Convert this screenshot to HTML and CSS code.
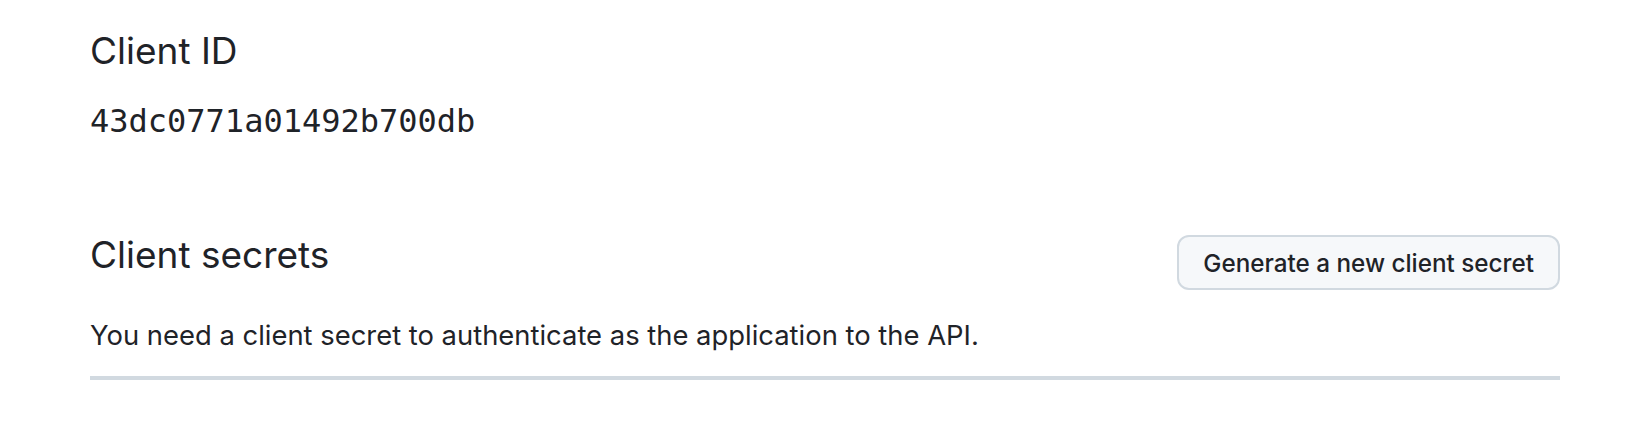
FILE: index.html
```html
<!DOCTYPE html>
<html lang="en">
<head>
<meta charset="utf-8">
<title>Client ID</title>
<link rel="stylesheet" href="styles.css">
</head>
<body>
<main class="page">
  <section class="client-id">
    <h2 class="title">Client ID</h2>
    <code class="id-value">43dc0771a01492b700db</code>
  </section>
  <section class="secrets">
    <div class="secrets-head">
      <h2 class="title">Client secrets</h2>
      <button class="btn" type="button">Generate a new client secret</button>
    </div>
    <p class="secrets-desc">You need a client secret to authenticate as the application to the API.</p>
  </section>
</main>
</body>
</html>
```
FILE: styles.css
```css
html, body {
  margin: 0;
  padding: 0;
  background: #ffffff;
}
body {
  color: #1f2328;
  font-family: Inter, "Noto Sans", "Liberation Sans", sans-serif;
}
.page {
  padding: 28px 90px 0 90px;
}
.title {
  margin: 0;
  font-size: 37px;
  line-height: 46px;
  font-weight: 400;
}
.id-value {
  display: block;
  margin-top: 27px;
  font-family: "DejaVu Sans Mono", "Liberation Mono", monospace;
  font-size: 32px;
  line-height: 40px;
}
.secrets {
  margin-top: 91px;
}
.secrets-head {
  display: flex;
  justify-content: space-between;
  align-items: flex-start;
}
.btn {
  margin-top: 3px;
  height: 55px;
  padding: 2px 24px 0 24px;
  border: 2px solid #d1d9e0;
  border-radius: 12px;
  background: #f6f8fa;
  color: #1f2328;
  font-family: Inter, "Noto Sans", "Liberation Sans", sans-serif;
  font-size: 24.25px;
  font-weight: 500;
  line-height: 49px;
}
.secrets-desc {
  margin: 25px 0 0 0;
  padding-bottom: 21px;
  border-bottom: 4px solid #d1d9e0;
  font-size: 27.4px;
  line-height: 40px;
}
```
